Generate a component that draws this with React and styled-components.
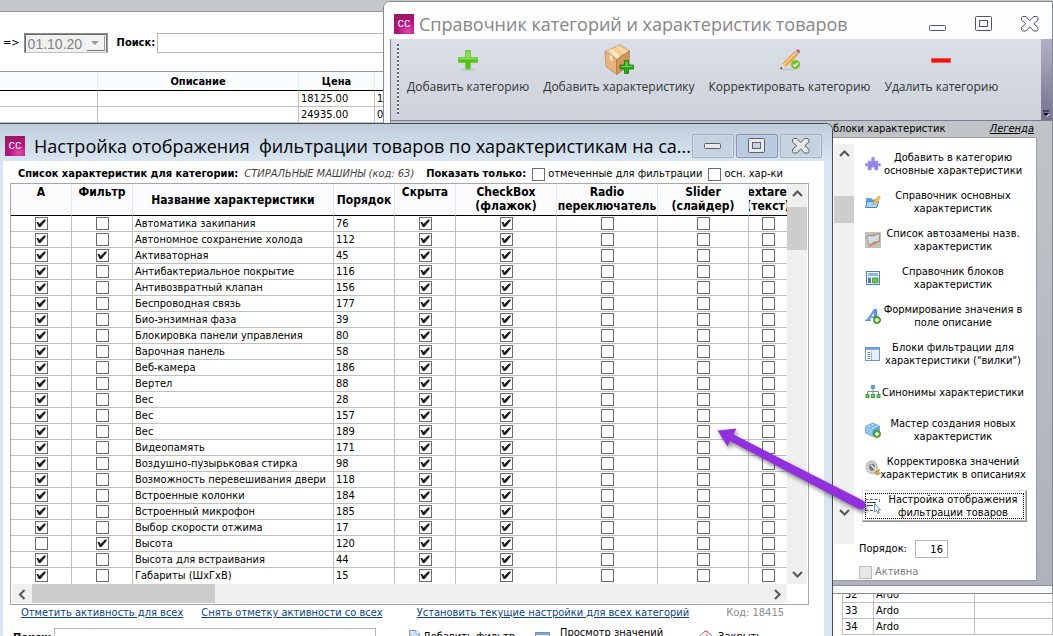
import React from "react";
import styled, { createGlobalStyle, css } from "styled-components";

const uiFont = `"DejaVu Sans Condensed", "DejaVu Sans", "Noto Sans", sans-serif`;
const titleFont = `"Open Sans", "Noto Sans", sans-serif`;
const line = "#bfbfbf";

const GlobalStyle = createGlobalStyle`
  *, *::before, *::after { box-sizing: border-box; }
  body { margin: 0; background: #fff; font: 11px/16px ${uiFont}; color: #000; overflow: hidden; }
  button, input, select { font: inherit; color: inherit; margin: 0; }
  table { border-collapse: separate; border-spacing: 0; table-layout: fixed; }
  th, td { padding: 0; }
`;

/* ---------- shared controls ---------- */

const Check = styled.input.attrs({ type: "checkbox" })`
  appearance: none;
  flex: none;
  display: block;
  width: 13px;
  height: 13px;
  border: 1px solid #6c6c6c;
  background: #fff;
  &:checked::before {
    content: "";
    display: block;
    width: 11px;
    height: 11px;
    background: #1c1c1c;
    clip-path: polygon(1px 4px, 3px 4px, 4px 6px, 8px 2px, 10px 1px, 10px 3px, 5px 9px, 3px 9px);
  }
  &:disabled { border-color: #bcbcbc; background: #e6e6e6; }
`;

const TextInput = styled.input.attrs({ type: "text" })`
  border: 1px solid #b5b5b5;
  background: #fff;
  padding: 0 4px;
  min-width: 0;
  height: ${(p) => p.$h || 20}px;
  outline: none;
`;

const CaptionButton = styled.button`
  width: 42px;
  height: 24px;
  padding: 0;
  display: grid;
  place-items: center;
  background: transparent;
  border: 1px solid transparent;
  border-radius: 2px;
  ${(p) =>
    p.$framed &&
    css`
      border-color: ${p.$strong ? "#8a93b4" : "#a3afbd"};
      background: ${p.$strong ? "#b9cbe0" : "#c5d3e1"};
      box-shadow: inset 0 0 0 1px ${p.$strong ? "#c3d0e6" : "#d0dce8"};
    `}
`;

const CaptionButtons = styled.div`
  display: flex;
  gap: ${(p) => p.$gap}px;
`;

function CaptionIcon({ kind, solid }) {
  const stroke = solid ? "#5f6068" : "#50546e";
  const fill = solid ? "#e9e9ec" : "#fdfdfd";
  return (
    <svg width="18" height="16" viewBox="0 0 18 16" fill={fill} stroke={stroke} aria-hidden="true">
      {kind === "min" && <rect x="0.5" y={solid ? 5.5 : 9.5} width="16" height="5" rx="1" />}
      {kind === "max" && (
        <>
          <rect x="0.5" y="0.5" width="16" height="14" rx="1" />
          <rect x="4.5" y="4.5" width="8" height="6" fill={solid ? "#c5d3e1" : "#fdfdfd"} />
        </>
      )}
      {kind === "close" && (
        <path d="M1.5 0.5H5L8.8 4.6 12.6 0.5H16L17 1.8V4L12.8 7.7 17 11.4V13.6L16 15H12.6L8.8 10.8 5 15H1.5L.5 13.6V11.4L4.8 7.7.5 4V1.8Z" />
      )}
    </svg>
  );
}

function Caption({ framed, gap }) {
  return (
    <CaptionButtons $gap={gap}>
      {[["min", "Свернуть"], ["max", "Развернуть"], ["close", "Закрыть окно"]].map(([k, label]) => (
        <CaptionButton key={k} $framed={framed} $strong={k === "max"} aria-label={label}>
          <CaptionIcon kind={k} solid={framed} />
        </CaptionButton>
      ))}
    </CaptionButtons>
  );
}

const AppLogo = styled.span`
  flex: none;
  width: 20px;
  height: 20px;
  display: grid;
  place-items: center;
  color: #fff;
  font: 11px/20px "Liberation Mono", monospace;
  background: radial-gradient(circle at 70% 85%, #dd4aa8 0, #b3127c 45%, #8f1f55 100%);
`;

const ScrollTrack = styled.div`
  display: flex;
  flex-direction: ${(p) => (p.$horizontal ? "row" : "column")};
  justify-content: space-between;
  flex: none;
  background: #f0f0f0;
`;

const ScrollArrow = styled.button`
  border: 0;
  padding: 0;
  background: transparent;
  width: 20px;
  height: 20px;
  flex: none;
  display: grid;
  place-items: center;
`;

const ScrollThumb = styled.div`
  background: #cdcdcd;
  flex: none;
  ${(p) =>
    p.$horizontal
      ? css`width: ${p.$size}px; margin-left: ${p.$offset}px; margin-right: auto;`
      : css`height: ${p.$size}px; margin-top: ${p.$offset}px; margin-bottom: auto;`}
`;

const chevrons = {
  up: "M1 7 5.5 2.5 10 7",
  down: "M1 3 5.5 7.5 10 3",
  left: "M7.500 1 3 5.500 7.500 10",
  right: "M3 1 7.500 5.500 3 10",
};
function Arrow({ dir, label }) {
  return (
    <ScrollArrow aria-label={label}>
      <svg width="11" height="11" viewBox="0 0 11 11" fill="none" stroke="#555" strokeWidth="2" aria-hidden="true">
        <path d={chevrons[dir]} />
      </svg>
    </ScrollArrow>
  );
}

/* ---------- page behind the windows ---------- */

const Desktop = styled.main`
  position: relative;
  display: flex;
  flex-direction: column;
  height: 100vh;
  overflow: hidden;
`;

const TopStrip = styled.div`
  flex: none;
  height: 12px;
  background: #c4c8cb;
  border-bottom: 1px solid #969696;
`;

const FilterBar = styled.form`
  flex: none;
  display: flex;
  align-items: center;
  height: 59px;
  padding: 2px 0 0 3px;
  gap: 4px;
`;

const DateBox = styled.div`
  position: relative;
  width: 84px;
  height: 20px;
  border: 1px solid;
  border-color: #8a8a8a #9a9a9a #c0c0c0 #8a8a8a;
  box-shadow: inset 1px 1px 0 #6d6d6d, inset -1px 0 0 #777;
  background: #f0f0f0;
`;

const DateSelect = styled.select`
  appearance: none;
  display: block;
  width: 100%;
  height: 18px;
  border: 0;
  padding: 2px 0 0 3px;
  background: transparent;
  color: #838383;
  font: 14px/16px "Liberation Sans", sans-serif;
  opacity: 1;
`;

const DropMark = styled.span`
  position: absolute;
  top: 2px;
  right: 2px;
  width: 18px;
  height: 15px;
  display: grid;
  place-items: center;
  background: #f3f3f3;
  border-right: 1px solid #999;
  border-bottom: 1px solid #777;
  pointer-events: none;
  &::before {
    content: "";
    border: 4px solid transparent;
    border-top-color: #999;
    border-bottom: 0;
  }
`;

const SearchLabel = styled.label`
  flex: 1;
  display: flex;
  align-items: center;
  gap: 2px;
  font-weight: bold;
  ${TextInput} { flex: 1; }
`;

const FilterSearch = styled(SearchLabel)`
  padding-left: 5px;
`;

const FooterSearch = styled(SearchLabel)`
  flex: none;
  width: 363px;
`;

const BackTable = styled.table`
  flex: none;
  width: 100%;
  border-top: 1px solid #969696;
  th { height: 19px; padding-top: 1px; border-bottom: 1px solid #000; border-right: 1px solid #e2ebf6; background: #fbfcfd; }
  td { height: 16px; line-height: 15px; padding-left: 2px; border-right: 1px solid ${line}; border-bottom: 1px solid ${line}; }
`;

const CornerTable = styled.table`
  flex: none;
  width: 211px;
  margin: auto 0 1px auto;
  border-left: 1px solid ${line};
  td { height: 16px; line-height: 15px; padding-left: 2px; border-right: 1px solid ${line}; border-bottom: 1px solid ${line}; }
`;

/* ---------- directory window ---------- */

const DirectoryWindow = styled.section`
  position: absolute;
  top: 1px;
  left: 383px;
  right: 0;
  display: flex;
  flex-direction: column;
  border: 1px solid #868b92;
  border-radius: 7px 0 0 0;
  background: #fafafa;
  overflow: hidden;
`;

const DirectoryTitle = styled.header`
  display: flex;
  align-items: center;
  height: 37px;
  padding: 6px 1px 0 10px;
  gap: 5px;
  background: #fdfdfd;
  color: #85878a;
  h1 { flex: 1; margin: 0; font: 18px/24px ${titleFont}; white-space: nowrap; }
`;

const DirectoryBody = styled.div`
  margin: 0 0 7px 6px;
  border-left: 1px solid #85858d;
  border-bottom: 1px solid #8d9298;
  background: linear-gradient(#c4c6c9, #adb2bb);
`;

const Ribbon = styled.nav`
  display: flex;
  height: 82px;
  background: linear-gradient(#dbdfe7, #cdd2db);
  border-bottom: 1px solid #7b7c96;
`;

const RibbonGrip = styled.span`
  flex: none;
  width: 2px;
  margin: 5px 0 5px 6px;
  background: repeating-linear-gradient(#5f5d8a 0 2px, #f2f2f8 2px 4px);
`;

const RibbonItems = styled.div`
  flex: 1;
  display: flex;
  gap: 14px;
  padding: 5px 0 0 8px;
`;

const RibbonButton = styled.button`
  flex: none;
  display: flex;
  flex-direction: column;
  align-items: center;
  align-self: flex-start;
  gap: 2px;
  padding: 0;
  border: 0;
  background: transparent;
  color: #333;
  font: 12px/18px ${titleFont};
  white-space: nowrap;
  svg { display: block; }
`;

const RibbonEnd = styled.span`
  flex: none;
  width: 11px;
  display: flex;
  align-items: flex-end;
  justify-content: center;
  padding-bottom: 2px;
  background: linear-gradient(#b3b0c6, #75718f);
`;

const BlocksHeader = styled.div`
  display: flex;
  justify-content: space-between;
  align-items: center;
  height: 16px;
  width: 220px;
  margin-left: auto;
  padding: 0 18px 0 1px;
  white-space: nowrap;
  a { color: #000; font-style: italic; }
`;

const BlocksPanel = styled.div`
  display: flex;
  width: 204px;
  margin: 0 15px 4px auto;
  padding-top: 6px;
  background: #fff;
  border: 1px solid #9a9da2;
  border-left: 0;
`;

const BlocksScroll = styled(ScrollTrack)`
  width: 20px;
  height: 400px;
  margin: 0 1px;
  padding-bottom: 22px;
`;

const BlocksColumn = styled.div`
  flex: 1;
  padding: 4px 8px 0 4px;
`;

const ActionList = styled.div`
  display: flex;
  flex-direction: column;
  gap: 6px;
  padding-left: 3px;
`;

const ActionButton = styled.button`
  display: flex;
  align-items: center;
  width: 165px;
  height: 32px;
  padding: 0 1px 0 2px;
  border: 1px solid transparent;
  background: #fff;
  line-height: 13px;
  font-size: 11px;
  white-space: pre;
  text-align: center;
  svg { flex: none; display: block; }
  span { flex: 1; display: flex; justify-content: center; min-width: 0; }
  ${(p) =>
    p.$active &&
    css`
      border-color: #e3e3e3 #8e8e8e #8e8e8e #e3e3e3;
      box-shadow: inset -1px -1px 0 #b5b5b5;
      outline: 1px dotted #000;
      outline-offset: -4px;
    `}
`;

const OrderRow = styled.label`
  display: flex;
  align-items: center;
  gap: 8px;
  margin-top: 18px;
  ${TextInput} { width: 33px; text-align: right; }
`;

const ActiveRow = styled.label`
  display: flex;
  align-items: center;
  gap: 3px;
  margin-top: 6px;
  color: #7c7c7c;
`;

/* ---------- filter settings window ---------- */

const SettingsWindow = styled.section`
  position: absolute;
  top: 123px;
  left: 0;
  right: 220px;
  display: flex;
  flex-direction: column;
  border: 1px solid #4a4d52;
  border-left: 0;
  border-radius: 0 7px 0 0;
  background: #d9e5f2;
  overflow: hidden;
`;

const SettingsTitle = styled.header`
  display: flex;
  align-items: center;
  height: 37px;
  padding: 6px 10px 0 5px;
  gap: 9px;
  background: linear-gradient(#c0cdda, #d9e5f2);
  h2 { flex: 1; min-width: 0; margin: 0; font: 18px/24px ${titleFont}; white-space: pre; }
`;

const SettingsBody = styled.div`
  margin: 0 8px 0 3px;
  background: #fff;
`;

const InfoRow = styled.div`
  display: flex;
  align-items: center;
  height: 22px;
  padding: 4px 0 0 15px;
  gap: 6px;
  white-space: nowrap;
  em { color: #444; }
  strong + em { margin-right: 6px; }
`;

const CheckLabel = styled.label`
  display: flex;
  align-items: center;
  gap: 3px;
`;

const GridFrame = styled.div`
  margin: 0 15px 0 7px;
  border: 1px solid #a6a6ac;
`;

const GridTop = styled.div`
  display: flex;
  justify-content: space-between;
  padding-right: 1px;
`;

const GridClip = styled.div`
  flex: 1;
  min-width: 0;
  overflow: hidden;
`;

const GridBottom = styled(ScrollTrack)`
  height: 19px;
  margin: 0 21px 1px 1px;
`;

const Grid = styled.table`
  width: 776px;
  thead th {
    height: 32px;
    border-bottom: 1px solid #000;
    border-right: 1px solid #dfe9f5;
    background: #fbfbfd;
    font-size: 12px;
    line-height: 14px;
    vertical-align: top;
  }
  tbody td, tbody th {
    height: 16px;
    line-height: 15px;
    font-weight: normal;
    text-align: left;
    white-space: nowrap;
    border-right: 1px solid ${line};
    border-bottom: 1px solid ${line};
  }
  tbody th, tbody th + td { padding-left: 2px; }
  tbody td:last-child, thead th:last-child { border-right: 0; }
  tbody tr:last-child > * { border-bottom-color: #fff; }
  ${Check} { margin: 0 auto; }
`;

const HeadText = styled.span`
  display: flex;
  flex-direction: column;
  align-items: center;
  overflow: hidden;
  white-space: nowrap;
  padding-top: ${(p) => (p.$low ? 9 : 1)}px;
`;

const LinksRow = styled.div`
  display: flex;
  align-items: center;
  height: 16px;
  padding: 0 40px 0 18px;
  white-space: nowrap;
  a { color: #0b3f8a; margin-right: 18px; }
  a:nth-of-type(2) { margin-right: 34px; }
  span { color: #8a8a8a; margin-left: auto; }
`;

const FooterRow = styled.div`
  display: flex;
  align-items: flex-start;
  height: 40px;
  padding: 7px 40px 0 10px;
`;

const FooterButton = styled.button`
  display: flex;
  align-items: flex-start;
  gap: ${(p) => p.$gap || 3}px;
  margin: ${(p) => (p.$tall ? -2 : 2)}px 0 0 ${(p) => p.$left}px;
  border: 0;
  padding: 0;
  background: transparent;
  line-height: 13px;
  white-space: nowrap;
  svg { flex: none; margin-top: ${(p) => (p.$tall ? 5 : 0)}px; }
`;

const PointerArrow = styled.svg`
  position: absolute;
  top: 422px;
  right: 181px;
  pointer-events: none;
  filter: drop-shadow(2px 3px 2px rgba(0, 0, 0, 0.45));
`;

/* ---------- icons ---------- */

const Svg16 = ({ children }) => (
  <svg width="16" height="16" viewBox="0 0 16 16" aria-hidden="true">{children}</svg>
);

const PlusBadge = ({ x, y }) => (
  <g transform={`translate(${x} ${y})`}>
    <circle r="3.600" fill="#5cae2c" stroke="#3c7d1b" strokeWidth=".7" />
    <path d="M-2 0H2M0-2V2" stroke="#fff" strokeWidth="1.300" />
  </g>
);

const icons = {
  puzzle: (
    <Svg16>
      <path fill="#8f83ee" stroke="#b3aaf5" strokeWidth=".6" d="M3 5H6.800V3.800C6 3 6.200 1 8 1S10 3 9.200 3.800V5H13V7.800H14C14.500 7 15.800 7.200 15.800 8.800S14.500 10.600 14 9.800H13V14H9.600V13C10.200 12 9.300 11 8 11S5.800 12 6.400 13V14H3V9.800H2C1.500 10.600.2 10.400.2 8.800S1.500 7 2 7.800H3Z" />
    </Svg16>
  ),
  folder: (
    <Svg16>
      <path fill="#5f9fe0" d="M1 4H6L7.500 5.500H12V14H1Z" />
      <path fill="#a9d4fb" stroke="#4687cf" d="M.6 13.500 2 7.500H13.500L12 13.500Z" />
      <path fill="#f7c948" stroke="#d8951d" strokeWidth=".7" d="M8.300 8.600 13.500 2 15.500 3.600 10.200 10 8 10.600Z" />
    </Svg16>
  ),
  book: (
    <Svg16>
      <path fill="#c2c2c2" d="M0 0H16V16H0Z" />
      <path fill="#cf8f4d" d="M1 4 5 3 15.300 1 14.600 10 4.500 15Z" />
      <path fill="#dce8f4" stroke="#8396ad" strokeWidth=".5" d="M2 4 8 4.200 14.500 2 13.600 9 9 9.800 4.600 12.800Z" />
      <path fill="none" stroke="#a5bad1" strokeWidth=".6" d="M8 4.200 9 9.800M4.500 6.500H7M5 8.500H7.500M10 5.500 12.500 5M10 7.500 12.500 7" />
    </Svg16>
  ),
  blocks: (
    <Svg16>
      <rect x="1.500" y="1.500" width="13" height="13" fill="#f6faff" stroke="#4a7fc0" />
      <path fill="#8db4e6" d="M3 3H13V6H3Z" />
      <path fill="#4d7fc4" d="M3 7.500H6V13H3Z" />
      <path fill="#6ac04e" stroke="#3e9328" strokeWidth=".8" d="M7.500 7.900H13V12.800H7.500Z" />
    </Svg16>
  ),
  letter: (
    <Svg16>
      <path fill="#5c95dc" d="M9 1H12L12.800 12.500H9L8.900 10H5.500L4.600 11.500H6V13H0L.6 11.500H2ZM8.600 4.600 6.300 8.400H8.800Z" />
      <PlusBadge x={12} y={12} />
    </Svg16>
  ),
  columns: (
    <Svg16>
      <rect x=".5" y="1.500" width="14" height="13" fill="#fbfdff" stroke="#6b94d0" />
      <path fill="#7aa5e0" d="M1 2H14V4H1Z" />
      <path fill="#e7effa" d="M7 5H14V14H7Z" />
      <path stroke="#6d87b3" d="M2.500 6.500H5M2.500 8.500H5M2.500 10.500H5M2.500 12.500H5" />
      <path stroke="#9dbbe3" d="M6.500 5V14" />
    </Svg16>
  ),
  tree: (
    <Svg16>
      <rect x="6" y="1" width="4" height="4" fill="#5f9ae0" />
      <path fill="none" stroke="#7d8a99" d="M8 5V10M2.500 10V7.500H13.500V10" />
      <path fill="#49a53f" d="M.5 10H4.500V14H.5ZM6 10H10V14H6ZM11.500 10H15.500V14H11.500Z" />
      <path fill="#8fd584" d="M1.500 11H3V12.500H1.500ZM7 11H8.500V12.500H7ZM12.500 11H14V12.500H12.500Z" />
    </Svg16>
  ),
  brick: (
    <Svg16>
      <path fill="#8cc8f2" stroke="#5a9bd0" strokeWidth=".7" d="M.6 4.500 7.500 1 14.500 4V10.500L7.500 14.500.6 11Z" />
      <path fill="#5ba5df" d="M7.500 8 14.200 4.500V10.300L7.500 14.200Z" />
      <path fill="#d3edfd" stroke="#5a9bd0" strokeWidth=".6" d="M2.500 4.500a1.800 1.100 0 1 0 3.600 0a1.800 1.100 0 1 0-3.600 0M6.200 6.200a1.800 1.100 0 1 0 3.600 0a1.800 1.100 0 1 0-3.600 0M5.800 2.800a1.800 1.100 0 1 0 3.600 0a1.800 1.100 0 1 0-3.600 0M9.300 4.300a1.800 1.100 0 1 0 3.600 0a1.800 1.100 0 1 0-3.600 0" />
      <PlusBadge x={12} y={12} />
    </Svg16>
  ),
  disc: (
    <Svg16>
      <path fill="#cfcfcf" stroke="#a3a3a3" strokeWidth=".7" d="M1 6C1 3 4 .8 7 .8S12 3 12 7V11L8 13.500C3 14 1 10 1 6Z" />
      <path fill="#7b7b7b" d="M4 7C4 4.500 6 3.200 8 3.800S10.500 7 9.800 9.500L7 11C5 10.500 4 9 4 7Z" />
      <path stroke="#f2f2f2" strokeWidth="1.300" d="M6 5 12 11" />
      <path fill="#d6a94e" stroke="#b08a3c" strokeWidth=".6" d="M11 10.500 14.500 9.500 13.500 12 15.500 13.500 12 15 9.500 13.500Z" />
    </Svg16>
  ),
  cursor: (
    <Svg16>
      <path fill="none" stroke="#56719a" strokeDasharray="3 1.500" d="M.5 1.500H14.500V5M.5 12.500H8M.5 1.500V12.500" />
      <path stroke="#33465f" strokeWidth="1.200" d="M2 4.500H11M2 7.500H8" />
      <path fill="#eef4fb" stroke="#55708f" strokeWidth=".8" d="M9.500 5.500V14L11.500 12.300 12.800 15.500 14.300 14.800 13 11.800H15.500Z" />
    </Svg16>
  ),
  addDoc: (
    <Svg16>
      <path fill="#cfe4f8" stroke="#6f9bcb" d="M5.500.5H12L15.500 4V15.500H5.500Z" />
      <path fill="#fff" stroke="#6f9bcb" strokeWidth=".7" d="M12 .5V4H15.500" />
      <path fill="#e9bd4e" d="M0 6H6V4L10 7.500 6 11V9H0Z" />
    </Svg16>
  ),
  door: (
    <Svg16>
      <path fill="#f2f2f2" stroke="#8b8b8b" d="M.5 6 6 1 11 3.500 14 8V15H3Z" />
      <path stroke="#d46a5a" d="M5 1.500 9 1M8 4V8" />
    </Svg16>
  ),
};

const IconAdd = () => (
  <svg width="32" height="32" viewBox="0 0 32 32" aria-hidden="true">
    <ellipse cx="16" cy="25.500" rx="7" ry="1.200" fill="#bfc6bd" />
    <path fill="#56bf1e" stroke="#74c94a" d="M13.500 6.500H18.500V13.500H25.500V18.500H18.500V25H13.500V18.500H6.500V13.500H13.500Z" />
    <path fill="#8bdc55" d="M14 7.500H18V14H24.500V15.500H7.500V14H14Z" />
  </svg>
);

const IconBox = () => (
  <svg width="32" height="32" viewBox="0 0 32 32" aria-hidden="true">
    <path fill="#f6cd95" stroke="#b88754" strokeWidth=".7" d="M2 7.500 17 .8 26.500 7 13.500 15Z" />
    <path fill="#e9b27a" stroke="#b88754" strokeWidth=".7" d="M2 7.500 13.500 15V30.500L3 22.500Z" />
    <path fill="#cf965c" stroke="#a87643" strokeWidth=".7" d="M13.500 15 26.500 7 26 22 13.500 30.500Z" />
    <path fill="#fce8cb" d="M6 6 9 4.700 16.500 11.500V13L13.500 15ZM6.500 10.500 9.500 12.500V17.500L6.500 15.300Z" />
    <path fill="#fbdcb0" d="M13 2.800 15 2 23.500 8.500 21.500 9.800Z" />
    <path fill="#2fa31c" stroke="#1c7a10" strokeWidth=".8" d="M21.500 16.500H25.500V21H30.500V25H25.500V29.500H21.500V25H17V21H21.500Z" />
    <path fill="#6dd14e" d="M22.500 17.500H24.500V22H29.500V23H18V22H22.500Z" />
  </svg>
);

const IconPencil = () => (
  <svg width="32" height="32" viewBox="0 0 32 32" aria-hidden="true">
    <ellipse cx="14" cy="25.500" rx="8" ry="1" fill="#c3c7cf" />
    <path fill="#f5a93a" stroke="#c67b1d" strokeWidth=".6" d="M20.500 8 23.500 11 11.500 22.500 8.800 19.800Z" />
    <path fill="#fbd58b" d="M20.500 8.700 21.700 9.900 10.500 21.200 9.500 20.200Z" />
    <path fill="#f1dcb9" d="M8.800 19.800 11.500 22.500 6.500 25Z" />
    <path fill="#333" d="M7.300 22.800 8.700 24.200 6 25.500Z" />
    <path fill="#b7bcc6" d="M20.500 8 22 6.500 25 9.500 23.500 11Z" />
    <path fill="#db5a6b" d="M22 6.500 23.500 5.200 25.800 6V8.500L25 9.500Z" />
    <circle cx="21.500" cy="20.500" r="4.500" fill="#76bf22" />
    <path fill="none" stroke="#fff" strokeWidth="1.500" d="M19.300 20.500 21 22.200 23.800 19" />
  </svg>
);

const IconRemove = () => (
  <svg width="32" height="32" viewBox="0 0 32 32" aria-hidden="true">
    <rect x="6.500" y="14.500" width="19" height="4" fill="#f01010" stroke="#f25a52" />
  </svg>
);

/* ---------- data ---------- */

const ribbon = [
  [IconAdd, "Добавить категорию"],
  [IconBox, "Добавить характеристику"],
  [IconPencil, "Корректировать категорию"],
  [IconRemove, "Удалить категорию"],
];

const actions = [
  ["puzzle", "Добавить в категорию\nосновные характеристики"],
  ["folder", "Справочник основных\nхарактеристик"],
  ["book", "Список автозамены назв.\nхарактеристик"],
  ["blocks", "Справочник блоков\nхарактеристик"],
  ["letter", "Формирование значения в\nполе описание"],
  ["columns", "Блоки фильтрации для\nхарактеристики (\"вилки\")"],
  ["tree", "Синонимы характеристики"],
  ["brick", "Мастер создания новых\nхарактеристик"],
  ["disc", "Корректировка значений\nхарактеристик в описаниях"],
  ["cursor", "Настройка отображения\nфильтрации товаров"],
];

const columns = [
  { w: 61, head: ["А"] },
  { w: 61, head: ["Фильтр"] },
  { w: 201, head: ["Название характеристики"], low: true },
  { w: 61, head: ["Порядок"], low: true },
  { w: 61, head: ["Скрыта"] },
  { w: 101, head: ["CheckBox", "(флажок)"] },
  { w: 101, head: ["Radio", "(переключатель)"] },
  { w: 91, head: ["Slider", "(слайдер)"] },
  { w: 38, head: ["Textarea", "(текст)"] },
];

const features = [
  ["Автоматика закипания", 76],
  ["Автономное сохранение холода", 112],
  ["Активаторная", 45, true, true],
  ["Антибактериальное покрытие", 116],
  ["Антивозвратный клапан", 156],
  ["Беспроводная связь", 177],
  ["Био-энзимная фаза", 39],
  ["Блокировка панели управления", 80],
  ["Варочная панель", 58],
  ["Веб-камера", 186],
  ["Вертел", 88],
  ["Вес", 28],
  ["Вес", 157],
  ["Вес", 189],
  ["Видеопамять", 171],
  ["Воздушно-пузырьковая стирка", 98],
  ["Возможность перевешивания двери", 118],
  ["Встроенные колонки", 184],
  ["Встроенный микрофон", 185],
  ["Выбор скорости отжима", 17],
  ["Высота", 120, false, true],
  ["Высота для встраивания", 44],
  ["Габариты (ШхГхВ)", 15],
];

/* ---------- sections ---------- */

function Background() {
  return (
    <>
      <TopStrip />
      <FilterBar onSubmit={(e) => e.preventDefault()}>
        <span>=&gt;</span>
        <DateBox>
          <DateSelect disabled aria-label="Дата">
            <option>01.10.20</option>
          </DateSelect>
          <DropMark />
        </DateBox>
        <FilterSearch>
          Поиск:
          <TextInput />
        </FilterSearch>
      </FilterBar>
      <BackTable>
        <colgroup>
          <col width="98" />
          <col width="201" />
          <col width="76" />
          <col />
        </colgroup>
        <thead>
          <tr><th /><th>Описание</th><th>Цена</th><th /></tr>
        </thead>
        <tbody>
          <tr><td /><td /><td>18125.00</td><td>1</td></tr>
          <tr><td /><td /><td>24935.00</td><td>0</td></tr>
        </tbody>
      </BackTable>
      <CornerTable>
        <colgroup>
          <col width="31" />
          <col width="101" />
          <col />
        </colgroup>
        <tbody>
          {[32, 33, 34].map((n) => (
            <tr key={n}><td>{n}</td><td>Ardo</td><td /></tr>
          ))}
        </tbody>
      </CornerTable>
    </>
  );
}

function Directory() {
  return (
    <DirectoryWindow>
      <DirectoryTitle>
        <AppLogo aria-hidden="true">CC</AppLogo>
        <h1>Справочник категорий и характеристик товаров</h1>
        <Caption gap={4} />
      </DirectoryTitle>
      <DirectoryBody>
        <Ribbon>
          <RibbonGrip />
          <RibbonItems>
            {ribbon.map(([Icon, label]) => (
              <RibbonButton key={label}>
                <Icon />
                {label}
              </RibbonButton>
            ))}
          </RibbonItems>
          <RibbonEnd>
            <svg width="7" height="8" viewBox="0 0 7 8" aria-hidden="true">
              <path d="M0 1H6" stroke="#111" />
              <path d="M0 3H6L3 6Z" fill="#111" />
              <path d="M3.500 7 6.500 4" stroke="#fff" />
            </svg>
          </RibbonEnd>
        </Ribbon>
        <BlocksHeader>
          <span>блоки характеристик</span>
          <a href="#legend">Легенда</a>
        </BlocksHeader>
        <BlocksPanel>
          <BlocksScroll>
            <Arrow dir="up" label="Вверх" />
            <ScrollThumb $size={27} $offset={32} />
            <Arrow dir="down" label="Вниз" />
          </BlocksScroll>
          <BlocksColumn>
            <ActionList>
              {actions.map(([icon, label], i) => (
                <ActionButton key={label} $active={i === actions.length - 1}>
                  {icons[icon]}
                  <span>{label}</span>
                </ActionButton>
              ))}
            </ActionList>
            <OrderRow>
              Порядок:
              <TextInput $h={18} defaultValue="16" />
            </OrderRow>
            <ActiveRow>
              <Check disabled />
              Активна
            </ActiveRow>
          </BlocksColumn>
        </BlocksPanel>
      </DirectoryBody>
    </DirectoryWindow>
  );
}

function FeatureRow({ name, order, active = true, filter = false }) {
  return (
    <tr>
      <td><Check defaultChecked={active} aria-label={`А: ${name}`} /></td>
      <td><Check defaultChecked={filter} aria-label={`Фильтр: ${name}`} /></td>
      <th scope="row">{name}</th>
      <td>{order}</td>
      <td><Check defaultChecked aria-label={`Скрыта: ${name}`} /></td>
      <td><Check defaultChecked aria-label={`CheckBox: ${name}`} /></td>
      <td><Check aria-label={`Radio: ${name}`} /></td>
      <td><Check aria-label={`Slider: ${name}`} /></td>
      <td><Check aria-label={`Textarea: ${name}`} /></td>
    </tr>
  );
}

function Settings() {
  return (
    <SettingsWindow>
      <SettingsTitle>
        <AppLogo aria-hidden="true">CC</AppLogo>
        <h2>Настройка отображения  фильтрации товаров по характеристикам на са...</h2>
        <Caption framed gap={2} />
      </SettingsTitle>
      <SettingsBody>
        <InfoRow>
          <strong>Список характеристик для категории:</strong>
          <em>СТИРАЛЬНЫЕ МАШИНЫ (код: 63)</em>
          <strong>Показать только:</strong>
          <CheckLabel><Check />отмеченные для фильтрации</CheckLabel>
          <CheckLabel><Check />осн. хар-ки</CheckLabel>
        </InfoRow>
        <GridFrame>
          <GridTop>
            <GridClip>
              <Grid>
                <colgroup>{columns.map((c) => <col key={c.head[0]} width={c.w} />)}</colgroup>
                <thead>
                  <tr>
                    {columns.map((c) => (
                      <th key={c.head[0]}>
                        <HeadText $low={c.low}>
                          {c.head.map((t) => <span key={t}>{t}</span>)}
                        </HeadText>
                      </th>
                    ))}
                  </tr>
                </thead>
                <tbody>
                  {features.map(([name, order, active, filter]) => (
                    <FeatureRow key={name + order} {...{ name, order, active, filter }} />
                  ))}
                </tbody>
              </Grid>
            </GridClip>
            <ScrollTrack>
              <Arrow dir="up" label="Вверх" />
              <ScrollThumb $size={43} $offset={3} />
              <Arrow dir="down" label="Вниз" />
            </ScrollTrack>
          </GridTop>
          <GridBottom $horizontal>
            <Arrow dir="left" label="Влево" />
            <ScrollThumb $horizontal $size={183} $offset={0} />
            <Arrow dir="right" label="Вправо" />
          </GridBottom>
        </GridFrame>
        <LinksRow>
          <a href="#mark">Отметить активность для всех</a>
          <a href="#unmark">Снять отметку активности со всех</a>
          <a href="#apply">Установить текущие настройки для всех категорий</a>
          <span>Код: 18415</span>
        </LinksRow>
        <FooterRow>
          <FooterSearch>
            Поиск:
            <TextInput />
          </FooterSearch>
          <FooterButton $left={28}>{icons.addDoc}Добавить фильтр</FooterButton>
          <FooterButton $tall $left={20} $gap={9}>{icons.columns}<span>Просмотр значений</span></FooterButton>
          <FooterButton $left={36}>{icons.door}Закрыть</FooterButton>
        </FooterRow>
      </SettingsBody>
    </SettingsWindow>
  );
}

export default function App() {
  return (
    <>
      <GlobalStyle />
      <Desktop>
        <Background />
        <Directory />
        <Settings />
        <PointerArrow width="160" height="96" viewBox="712 422 160 96" aria-hidden="true">
          <path
            fill="#9230de"
            d="M717.500 430.500 736.500 428.500 733.500 434.500 863 500.500A4.700 4.700 0 0 1 858.500 509L730 441 727.500 446.500Z"
          />
        </PointerArrow>
      </Desktop>
    </>
  );
}
